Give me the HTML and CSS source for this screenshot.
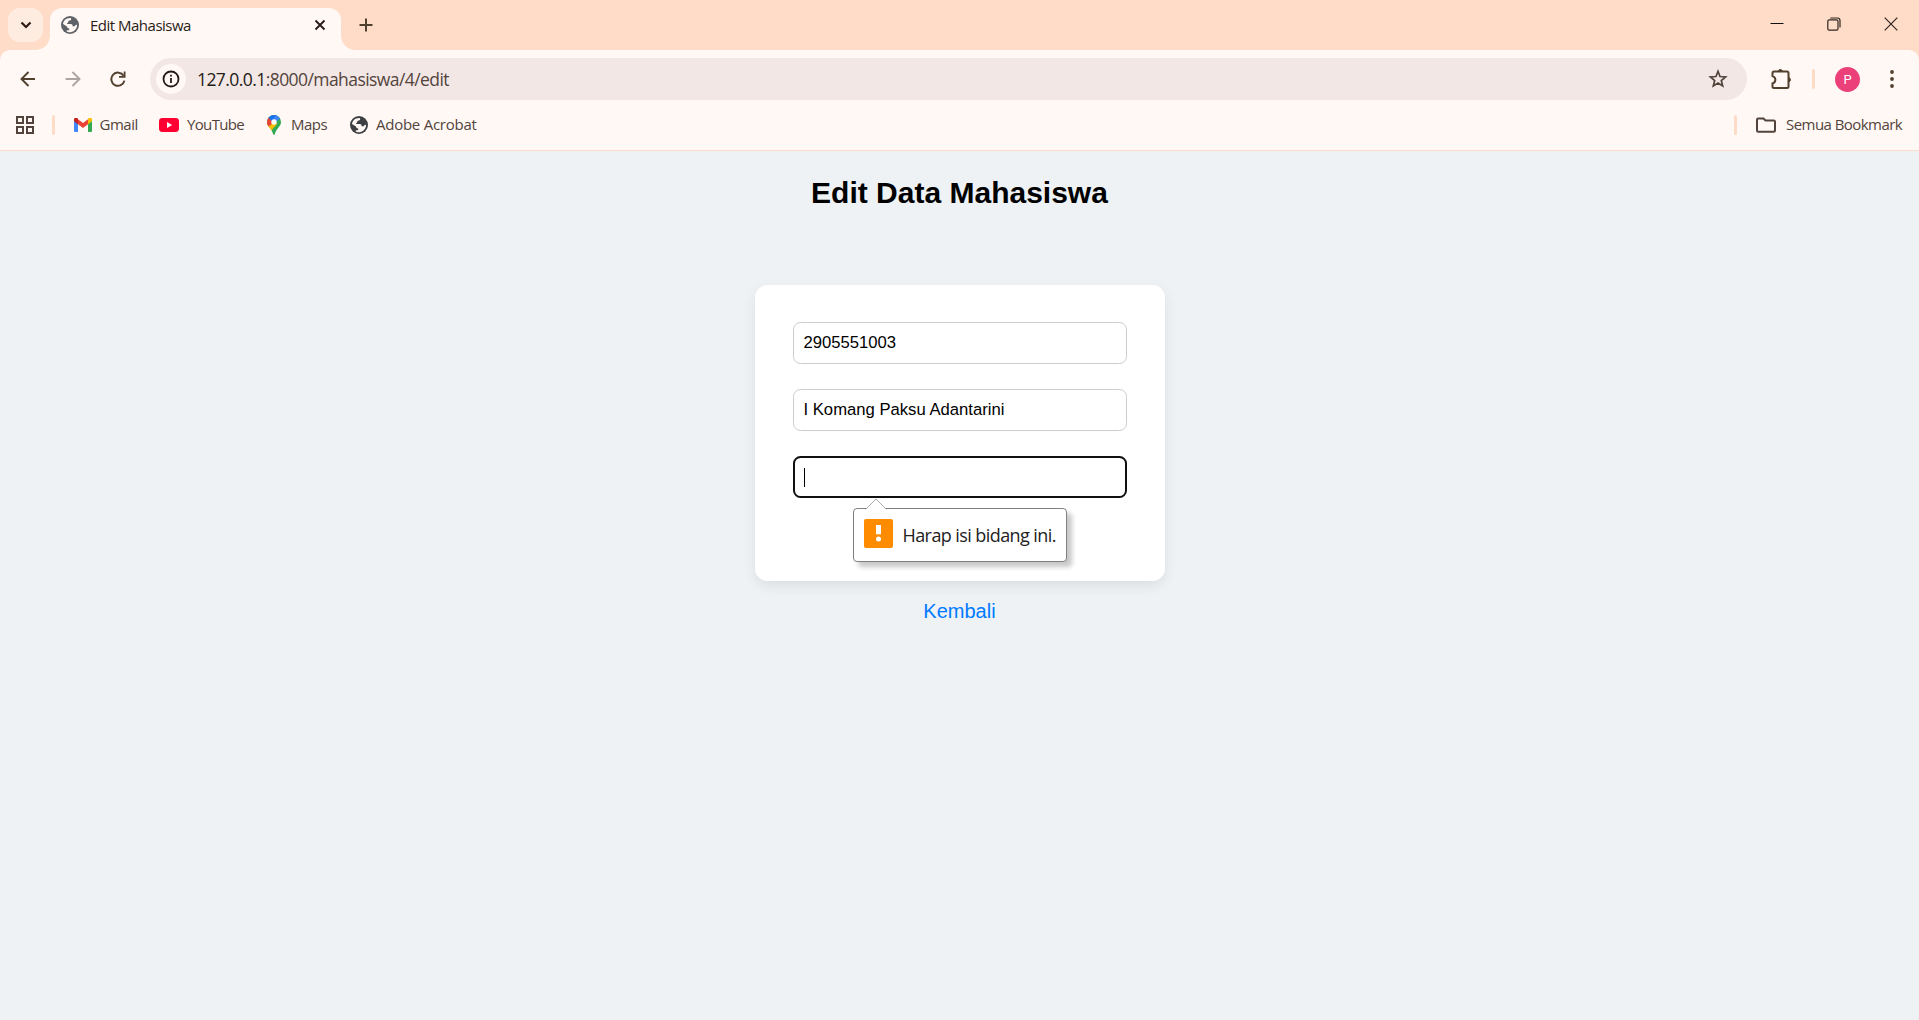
FILE: index.html
```html
<!DOCTYPE html>
<html lang="id">
<head>
<meta charset="utf-8">
<title>Edit Mahasiswa</title>
<link rel="stylesheet" href="styles.css">
</head>
<body>
<svg class="defs" width="0" height="0">
  <symbol id="globe" viewBox="0 0 18 18">
    <circle cx="9" cy="9" r="9" fill="currentColor"/>
    <path d="M9.7 1.9C11 3.1 10.3 4.3 8.7 4.4 7.6 4.5 7.2 5.1 7.2 6.1 7.2 7.2 5.9 7 5.9 8.1H9.7C11.2 8.1 11.6 8.9 11.6 10.2H12.8C13.9 10.2 14.4 9.7 14.6 8.7L16.1 8.6C16.2 12.7 13.2 16.1 9.2 16.2 7.5 16.2 6.5 15.8 5.5 15.2L6 14.2H8.2V12.4C6.7 12.4 6.1 11.7 6 10.5L2 8.1C2.3 4.6 5.2 1.7 9.7 1.9Z" fill="#fff8f5"/>
    <path d="M9.6 1.2 12.8 2.2 15.8 5.4 16.2 8.4 13.7 8.8 12.2 7.2H10.2C9 7.2 8.7 5.6 9.6 4.8 10.8 4.2 11 3 9.6 1.2Z" fill="currentColor"/>
  </symbol>
</svg>

<header class="browser">
  <div class="tabstrip">
    <button class="tab-search" aria-label="Tab">
      <svg width="12" height="8" viewBox="0 0 12 8"><path d="M1.5 1.5 6 6 10.5 1.5" fill="none" stroke="#2b1d16" stroke-width="2.2"/></svg>
    </button>
    <div class="tab">
      <svg class="favicon" width="18" height="18"><use href="#globe"/></svg>
      <span class="tab-title">Edit Mahasiswa</span>
      <svg class="tab-close" width="12" height="12" viewBox="0 0 12 12"><path d="M1.5 1.5 10.5 10.5M10.5 1.5 1.5 10.5" stroke="#2b1d16" stroke-width="1.9"/></svg>
    </div>
    <svg class="new-tab" width="14" height="14" viewBox="0 0 14 14"><path d="M7 .5V13.5M.5 7H13.5" stroke="#52402f" stroke-width="2"/></svg>
    <div class="window-controls">
      <svg width="14" height="14" viewBox="0 0 14 14"><path d="M.5 6.5H13.5" stroke="#111" stroke-width="1"/></svg>
      <svg width="14" height="14" viewBox="0 0 14 14"><g fill="none" stroke="#30251f" stroke-width="1.2"><rect x=".8" y="2.8" width="10.2" height="10.4" rx="1.4"/><path d="M3.3 1H10.5Q13 1 13 3.5V10.6"/></g></svg>
      <svg width="14" height="14" viewBox="0 0 14 14"><path d="M.7.7 13.3 13.3M13.3.7.7 13.3" stroke="#30251f" stroke-width="1.2"/></svg>
    </div>
  </div>

  <div class="toolbar">
    <svg class="nav" width="16" height="16" viewBox="0 0 16 16"><path d="M15 8H2M8.5 1 1.5 8 8.5 15" fill="none" stroke="#52402f" stroke-width="1.9"/></svg>
    <svg class="nav" width="16" height="16" viewBox="0 0 16 16"><path d="M.6 8H14M7.5 1 14.5 8 7.5 15" fill="none" stroke="#ada39f" stroke-width="1.9"/></svg>
    <svg class="nav reload" width="16" height="16" viewBox="0 0 16 16"><path d="M13.6 4.8A6.6 6.6 0 1 0 14.4 9.6" fill="none" stroke="#52402f" stroke-width="2"/><path d="M15.5.5V6.8H9V5H13.7V.5Z" fill="#52402f"/></svg>
    <div class="omnibox">
      <span class="site-info">
        <svg width="18" height="18" viewBox="0 0 18 18"><circle cx="9" cy="9" r="7.5" fill="none" stroke="#221a16" stroke-width="1.8"/><path d="M9 8V13M9 4.8V6.6" stroke="#221a16" stroke-width="1.8"/></svg>
      </span>
      <span class="url"><b>127.0.0.1</b>:8000/mahasiswa/4/edit</span>
      <svg class="star" width="20" height="20" viewBox="0 0 20 20"><path d="M10 2.3 12 7.5 17.6 7.9 13.3 11.5 14.7 17 10 14 5.3 17 6.7 11.5 2.4 7.9 8 7.5Z" fill="none" stroke="#52443c" stroke-width="1.7"/></svg>
    </div>
    <svg class="extensions" width="22" height="22" viewBox="0 0 22 22"><path d="M4 3.5H17Q18.5 3.5 18.5 5V18.5Q18.5 20 17 20H4Q2.5 20 2.5 18.5V15.4C6.3 14.2 6.3 9.3 2.5 8.1V5Q2.5 3.5 4 3.5Z" fill="none" stroke="#52402f" stroke-width="2"/><path d="M8.3 3A2.1 2.1 0 0 1 12.3 3ZM19 9.7A2.1 2.1 0 0 1 19 13.7Z" fill="#52402f" stroke="#52402f"/></svg>
    <i class="divider"></i>
    <span class="avatar">P</span>
    <svg class="menu" width="4" height="18" viewBox="0 0 4 18" fill="#52402f"><circle cx="2" cy="2" r="1.9"/><circle cx="2" cy="9" r="1.9"/><circle cx="2" cy="16" r="1.9"/></svg>
  </div>

  <nav class="bookmarks">
    <svg class="apps" width="18" height="18" viewBox="0 0 18 18"><path d="M1 1H7V7H1ZM11 1H17V7H11ZM1 11H7V17H1ZM11 11H17V17H11Z" fill="none" stroke="#52443c" stroke-width="2"/></svg>
    <i class="divider"></i>
    <span class="bookmark gmail">
      <svg width="18" height="14" viewBox="0 0 18 14"><path d="M0 3V12.8Q0 14 1.2 14H4V5Z" fill="#4285f4"/><path d="M18 3V12.8Q18 14 16.8 14H14V5Z" fill="#34a853"/><path d="M4 1.3 9 5 14 1.3V6.3L9 10 4 6.3Z" fill="#ea4335"/><path d="M0 3.2V2A2 2 0 0 1 4 1.3V6.3Z" fill="#c5221f"/><path d="M18 3.2V2A2 2 0 0 0 14 1.3V6.3Z" fill="#fbbc04"/></svg>
      <span>Gmail</span>
    </span>
    <span class="bookmark youtube">
      <svg width="20" height="14" viewBox="0 0 20 14"><rect width="20" height="14" rx="3.4" fill="#ff0033"/><path d="M8 4V10L13.2 7Z" fill="#fff"/></svg>
      <span>YouTube</span>
    </span>
    <span class="bookmark maps">
      <svg width="14" height="20" viewBox="0 0 14 20"><clipPath id="pin"><path d="M7 0A7 7 0 0 1 14 7C14 11.8 9.5 13 7.9 19Q7 21 6.1 19C4.5 13 0 11.8 0 7A7 7 0 0 1 7 0Z"/></clipPath><g clip-path="url(#pin)"><path d="M0 0H14V20H0Z" fill="#34a853"/><path d="M-1 10 7 4 10 9 3 17Z" fill="#fbbc04"/><path d="M-1 1 2 2 7 7 0 13Z" fill="#ea4335"/><path d="M1 2.5 4-1H10L13 3.5 7 8Z" fill="#1a73e8"/><path d="M9 0 13 3 8 8 5 6Z" fill="#4285f4"/></g><circle cx="7" cy="7" r="2.7" fill="#fff"/></svg>
      <span>Maps</span>
    </span>
    <span class="bookmark acrobat">
      <svg width="18" height="18"><use href="#globe"/></svg>
      <span>Adobe Acrobat</span>
    </span>
    <i class="divider divider-end"></i>
    <span class="bookmark all">
      <svg width="20" height="16" viewBox="0 0 20 16"><path d="M2.2 1.5H7.5L9.5 3.5H17.8Q19 3.5 19 4.7V13.6Q19 14.8 17.8 14.8H2.2Q1 14.8 1 13.6V2.7Q1 1.5 2.2 1.5Z" fill="none" stroke="#52443c" stroke-width="2"/></svg>
      <span>Semua Bookmark</span>
    </span>
  </nav>
</header>

<main class="page">
  <h1 class="title">Edit Data Mahasiswa</h1>
  <form class="card">
    <div class="field">2905551003</div>
    <div class="field">I Komang Paksu Adantarini</div>
    <div class="field focused">
      <i class="caret"></i>
      <div class="tooltip" role="alert">
        <svg class="tip-arrow" width="22" height="12" viewBox="0 0 22 12"><path d="M1 11.5 11 1 21 11.5V12H1Z" fill="#fff"/><path d="M.8 11.2 11 1 21.2 11.2" fill="none" stroke="#aaa"/></svg>
        <svg class="warn" width="29" height="29" viewBox="0 0 29 29"><rect width="29" height="29" rx="2" fill="#ff8c00"/><path d="M12 6H17V15.3H12Z" fill="#fff"/><circle cx="14.5" cy="20" r="2.5" fill="#fff"/></svg>
        <span class="tip-text">Harap isi bidang ini.</span>
      </div>
    </div>
  </form>
  <a class="back">Kembali</a>
</main>
</body>
</html>
```
FILE: styles.css
```css
* { box-sizing: border-box; }
body {
  margin: 0;
  height: 1020px;
  overflow: hidden;
  background: #eef2f5;
  font-family: "Liberation Sans", Arial, sans-serif;
}
svg { display: block; flex: none; }
.defs { position: absolute; }

/* Browser frame */
.browser {
  height: 151px;
  background: #ffdcc8;
  border-bottom: 1px solid #fbdccd;
  font-family: "Open Sans", "Noto Sans", sans-serif;
  color: #52443c;
  white-space: nowrap;
}
.tabstrip { display: flex; height: 50px; padding-left: 8px; }
.tab-search {
  display: grid;
  place-items: center;
  width: 35px;
  height: 34px;
  margin: 8px 7px 0 0;
  padding: 0;
  border: 0;
  border-radius: 12px;
  background: #ffece1;
}
.tab {
  position: relative;
  display: flex;
  align-items: center;
  width: 290.5px;
  height: 42px;
  margin-top: 8px;
  padding: 0 15px 8px 11px;
  border-radius: 12px 12px 0 0;
  background: #fff8f5;
}
.tab::before, .tab::after {
  content: "";
  position: absolute;
  bottom: 0;
  width: 14px;
  height: 14px;
}
.tab::before { left: -14px; background: radial-gradient(circle at 0 0, transparent 13.5px, #fff8f5 14px); }
.tab::after { right: -14px; background: radial-gradient(circle at 100% 0, transparent 13.5px, #fff8f5 14px); }
.favicon { color: #5f6368; }
.tab-title { margin-left: 11px; font-size: 15px; letter-spacing: -0.5px; color: #2b1d16; }
.tab-close { margin-left: auto; }
.new-tab { margin: 18px 0 0 18px; }
.window-controls { display: flex; gap: 43px; margin: 17px 21px 0 auto; }

.toolbar {
  display: flex;
  align-items: center;
  height: 58px;
  padding-left: 20px;
  border-radius: 10px 10px 0 0;
  background: #fff8f5;
}
.nav { margin-right: 29px; }
.nav.reload { margin-right: 24px; }
.omnibox {
  display: flex;
  align-items: center;
  width: 1597px;
  height: 42px;
  padding: 0 19px 0 6px;
  border-radius: 21px;
  background: #f2e7e5;
}
.site-info {
  display: grid;
  place-items: center;
  width: 30px;
  height: 30px;
  border-radius: 50%;
  background: #fff8f5;
}
.url { margin-left: 11px; font-size: 17.5px; letter-spacing: -0.57px; }
.url b { font-weight: 400; color: #221a16; }
.star { margin-left: auto; }
.extensions { margin-left: 23px; }
.divider { width: 3px; height: 20px; border-radius: 2px; background: #ffdcc8; }
.toolbar .divider { margin-left: 20px; }
.avatar {
  display: grid;
  place-items: center;
  width: 25px;
  height: 25px;
  margin-left: 20px;
  border-radius: 50%;
  background: #ec407a;
  color: #fff;
  font: 13px Roboto, sans-serif;
}
.menu { margin-left: 30px; }

.bookmarks {
  display: flex;
  align-items: center;
  height: 42px;
  padding: 0 17px 8px 16px;
  background: #fff8f5;
  font-size: 15px;
}
.bookmarks > .divider { margin: 0 18.5px 0 18px; }
.bookmark { display: flex; align-items: center; gap: 8px; letter-spacing: -0.5px; }
.bookmark span { padding-bottom: 2px; }
.gmail { width: 85.5px; }
.youtube { width: 108px; letter-spacing: -0.65px; }
.maps { width: 83px; gap: 10px; }
.acrobat { color: #3c4043; letter-spacing: -0.25px; }
.acrobat span { color: #52443c; }
.bookmarks > .divider-end { margin: 0 19px 0 auto; }
.all { width: 146px; gap: 10px; letter-spacing: -0.55px; }

/* Form page */
.page { display: flex; flex-direction: column; align-items: center; }
.title { margin: 25px 0 75px; font-size: 30px; line-height: 34px; }
.card {
  display: flex;
  flex-direction: column;
  gap: 25px;
  width: 410px;
  height: 296px;
  padding: 37px 38px;
  border-radius: 12.5px;
  background: #fff;
  box-shadow: 0 5px 12.5px rgba(0, 0, 0, 0.08);
}
.field {
  position: relative;
  height: 42px;
  padding: 10px;
  border: 1px solid #ccc;
  border-radius: 7.5px;
  font-size: 16.67px;
  line-height: 19px;
  color: #000;
}
.field.focused { border: 2px solid #101010; padding: 10px 9px; }
.caret { display: block; width: 1px; height: 19px; background: #000; }
.tooltip {
  position: absolute;
  left: 58px;
  top: 50px;
  display: flex;
  align-items: flex-start;
  width: 214px;
  height: 54px;
  padding: 10px;
  border: 1px solid #808080;
  border-radius: 4px;
  background: #fff;
  box-shadow: 5px 5px 5px rgba(0, 0, 0, 0.22);
  font: 18px/26px "Open Sans", "Noto Sans", sans-serif;
  letter-spacing: -0.58px;
  white-space: nowrap;
  color: #222;
}
.tip-arrow { position: absolute; left: 11px; top: -11px; }
.tip-text { margin: 3px 0 0 10px; }
.back { margin-top: 19px; font-size: 20px; line-height: 23px; color: #007bff; }
```
